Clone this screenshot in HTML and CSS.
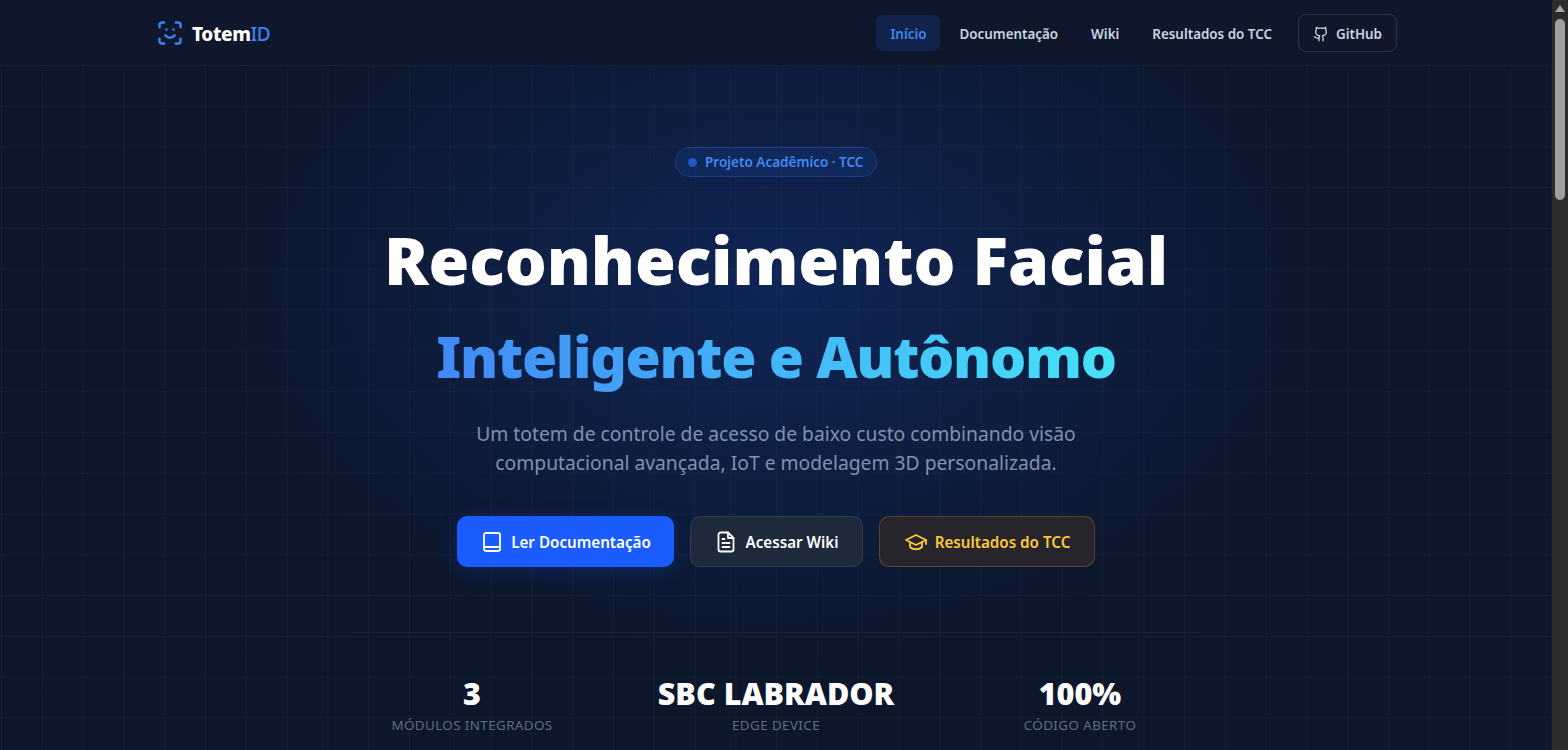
FILE: index.html
```html
<!DOCTYPE html>
<html lang="pt-BR">
<head>
  <meta charset="UTF-8">
  <meta name="viewport" content="width=device-width, initial-scale=1.0">
  <title>TotemID</title>
  <link rel="stylesheet" href="styles.css">
</head>
<body>
  <div class="page">
    <header class="navbar">
      <div class="navbar-inner">
        <a class="brand" href="#">
          <svg class="brand-icon" viewBox="0 0 24 24"><path d="M3 7V5a2 2 0 0 1 2-2h2"/><path d="M17 3h2a2 2 0 0 1 2 2v2"/><path d="M21 17v2a2 2 0 0 1-2 2h-2"/><path d="M7 21H5a2 2 0 0 1-2-2v-2"/><path d="M8 14s1.5 2 4 2 4-2 4-2"/><path d="M9 9h.01"/><path d="M15 9h.01"/></svg>
          <span class="brand-name">Totem<span class="brand-accent">ID</span></span>
        </a>
        <nav class="nav-links">
          <a class="nav-link active" href="#">Início</a>
          <a class="nav-link" href="#">Documentação</a>
          <a class="nav-link" href="#">Wiki</a>
          <a class="nav-link" href="#">Resultados do TCC</a>
          <a class="nav-github" href="#">
            <svg class="icon-sm" viewBox="0 0 24 24"><path d="M15 22v-4a4.8 4.8 0 0 0-1-3.5c3 0 6-2 6-5.5.08-1.25-.27-2.48-1-3.5.28-1.15.28-2.35 0-3.5 0 0-1 0-3 1.5-2.64-.5-5.36-.5-8 0C6 2 5 2 5 2c-.3 1.15-.3 2.35 0 3.5A5.403 5.403 0 0 0 4 9c0 3.5 3 5.5 6 5.5-.39.49-.68 1.05-.85 1.65-.17.6-.22 1.23-.15 1.85v4"/><path d="M9 18c-4.51 2-5-2-7-2"/></svg>
            GitHub
          </a>
        </nav>
      </div>
    </header>

    <main class="hero">
      <div class="badge"><span class="badge-dot"></span>Projeto Acadêmico · TCC</div>
      <h1 class="hero-title">Reconhecimento Facial</h1>
      <h2 class="hero-subtitle">Inteligente e Autônomo</h2>
      <p class="hero-text">Um totem de controle de acesso de baixo custo combinando visão computacional avançada, IoT e modelagem 3D personalizada.</p>

      <div class="hero-actions">
        <a class="btn btn-primary" href="#">
          <svg class="icon" viewBox="0 0 24 24"><path d="M4 5a2 2 0 0 1 2-2h12a2 2 0 0 1 2 2v14a2 2 0 0 1-2 2H6a2 2 0 0 1-2-2z"/><path d="M4 17h16"/></svg>
          Ler Documentação
        </a>
        <a class="btn btn-dark" href="#">
          <svg class="icon" viewBox="0 0 24 24"><path d="M14 2.5H6.5a2 2 0 0 0-2 2v15a2 2 0 0 0 2 2h11a2 2 0 0 0 2-2V8z"/><path d="M14 2.5V8h5.5"/><path d="M8.5 9h2"/><path d="M8.5 13h7"/><path d="M8.5 17h7"/></svg>
          Acessar Wiki
        </a>
        <a class="btn btn-gold" href="#">
          <svg class="icon" viewBox="0 0 24 24"><path d="M22 10 12 5 2 10l10 5z"/><path d="M6 12v5c3 3 9 3 12 0v-5"/><path d="M22 10v4"/></svg>
          Resultados do TCC
        </a>
      </div>

      <div class="stats">
        <div class="stat"><div class="stat-value">3</div><div class="stat-label">Módulos integrados</div></div>
        <div class="stat"><div class="stat-value">SBC LABRADOR</div><div class="stat-label">Edge device</div></div>
        <div class="stat"><div class="stat-value">100%</div><div class="stat-label">Código aberto</div></div>
      </div>
    </main>
  </div>

  <!-- scrollbar of the browser window -->
  <div class="scrollbar">
    <div class="scroll-arrow"></div>
    <div class="scroll-thumb"></div>
  </div>
</body>
</html>
```

FILE: styles.css
```css
* {
  box-sizing: border-box;
}

html, body {
  height: 100%;
  margin: 0;
  overflow: hidden;
}

body {
  font-family: "Noto Sans", "Open Sans", Arial, sans-serif;
  background-color: #0d172c;
  color: #fff;
}

a {
  text-decoration: none;
  color: inherit;
}

.page {
  width: 1552px;
  height: 750px;
  overflow: hidden;
  background-color: #0d172c;
  background-image:
    radial-gradient(ellipse 560px 370px at 776px 290px, rgba(20, 62, 160, 0.36), rgba(20, 62, 160, 0) 100%),
    linear-gradient(rgba(148, 163, 184, 0.05) 1px, transparent 1px),
    linear-gradient(90deg, rgba(148, 163, 184, 0.05) 1px, transparent 1px);
  background-size: 100% 100%, 40.8px 40.8px, 40.8px 40.8px;
  background-position: 0 0, 0 24px, 1px 0;
}

/* Navbar */
.navbar {
  height: 66px;
  padding-top: 1px;
  background-color: #0e172b;
  border-bottom: 1px solid rgba(148, 163, 184, 0.07);
}

.navbar-inner {
  width: 1240px;
  height: 100%;
  margin: 0 auto 0 157px;
  display: flex;
  align-items: center;
  justify-content: space-between;
}

.brand {
  display: flex;
  align-items: center;
  gap: 8px;
  font-size: 19px;
  font-weight: 800;
  letter-spacing: -0.4px;
}

.brand-name {
  padding-top: 2px;
}

.brand-icon {
  width: 28px;
  height: 28px;
  margin-left: -1px;
  fill: none;
  stroke: #3b82f6;
  stroke-width: 2.1;
  stroke-linecap: round;
  stroke-linejoin: round;
}

.brand-accent {
  color: #3b82f6;
  font-weight: 500;
}

.nav-links {
  display: flex;
  align-items: center;
  gap: 5px;
}

.nav-link {
  padding: 9px 14px 7px;
  border-radius: 8px;
  font-size: 13.4px;
  line-height: 20px;
  font-weight: 600;
  color: #cbd5e1;
}

.nav-link.active {
  margin-left: 1px;
  background-color: rgba(37, 99, 235, 0.16);
  color: #4088f0;
}

.nav-github {
  display: flex;
  align-items: center;
  gap: 7px;
  height: 38px;
  margin-left: 7px;
  padding: 1px 14px 0;
  border: 1px solid rgba(148, 163, 184, 0.22);
  border-radius: 8px;
  font-size: 13.4px;
  font-weight: 600;
  color: #cbd5e1;
}

.icon-sm {
  width: 16px;
  height: 16px;
  fill: none;
  stroke: currentColor;
  stroke-width: 2;
  stroke-linecap: round;
  stroke-linejoin: round;
}

/* Hero */
.hero {
  display: flex;
  flex-direction: column;
  align-items: center;
  padding-top: 81px;
}

.badge {
  display: flex;
  align-items: center;
  gap: 8px;
  height: 30px;
  padding: 0 13px 0 12.5px;
  border: 1px solid rgba(59, 130, 246, 0.25);
  border-radius: 15px;
  background-color: rgba(37, 99, 235, 0.12);
  font-size: 13.5px;
  font-weight: 600;
  color: #4088f0;
}

.badge-dot {
  width: 9px;
  height: 9px;
  border-radius: 50%;
  background-color: #2058c8;
}

.hero-title {
  margin: 41px 0 0;
  font-size: 66px;
  line-height: 82px;
  font-weight: 900;
  letter-spacing: -0.1px;
  color: #fff;
}

.hero-subtitle {
  margin: 15px 0 0;
  font-size: 57px;
  line-height: 82px;
  font-weight: 900;
  letter-spacing: -1.3px;
  background: linear-gradient(90deg, #4189f7, #45e3f8);
  -webkit-background-clip: text;
  background-clip: text;
  color: transparent;
}

.hero-text {
  width: 640px;
  margin: 22px 0 0;
  font-size: 19.3px;
  line-height: 29px;
  text-align: center;
  color: #8091ae;
}

.hero-actions {
  display: flex;
  gap: 16px;
  margin-top: 39px;
}

.btn {
  display: flex;
  align-items: center;
  justify-content: center;
  gap: 7px;
  height: 51px;
  border-radius: 10px;
  font-size: 15.2px;
  font-weight: 600;
}

.btn-primary {
  width: 217px;
  background-color: #1a5cff;
  box-shadow: 0 4px 20px rgba(26, 92, 255, 0.2);
}

.btn-dark {
  width: 173px;
  background-color: #1e293b;
  border: 1px solid rgba(148, 163, 184, 0.15);
}

.btn-gold {
  width: 216px;
  background-color: #27252b;
  border: 1px solid rgba(251, 191, 36, 0.22);
  color: #fbc83a;
}

.icon {
  width: 24px;
  height: 24px;
  fill: none;
  stroke: currentColor;
  stroke-width: 1.8;
  stroke-linecap: round;
  stroke-linejoin: round;
}

/* Stats */
.stats {
  display: grid;
  grid-template-columns: repeat(3, 1fr);
  gap: 64px;
  width: 848px;
  margin-top: 65px;
  padding: 40px 0 0;
  border-top: 1px solid rgba(148, 163, 184, 0.1);
}

.stat {
  text-align: center;
}

.stat-value {
  font-size: 30.5px;
  line-height: 40px;
  font-weight: 900;
  white-space: nowrap;
}

.stat-label {
  margin-top: 2px;
  font-size: 13.4px;
  line-height: 20px;
  letter-spacing: 0.4px;
  text-transform: uppercase;
  color: #5d6d88;
}

/* Window scrollbar, painted over the page */
.scrollbar {
  position: fixed;
  top: 0;
  right: 0;
  width: 16px;
  height: 750px;
  background-color: #2c2c2c;
}

.scroll-arrow {
  width: 0;
  height: 0;
  margin: 5px auto 0;
  border-left: 5px solid transparent;
  border-right: 5px solid transparent;
  border-bottom: 7px solid #a6a6a6;
}

.scroll-thumb {
  width: 10px;
  height: 181px;
  margin: 7px auto 0;
  border-radius: 5px;
  background-color: #9f9f9f;
}
```
